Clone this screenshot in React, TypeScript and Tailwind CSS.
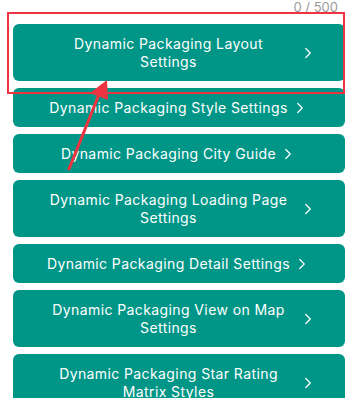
import { ChevronRight } from "lucide-react"

const items: { lines: string[] }[] = [
    { lines: ["Dynamic Packaging Layout", "Settings"] },
    { lines: ["Dynamic Packaging Style Settings"] },
    { lines: ["Dynamic Packaging City Guide"] },
    { lines: ["Dynamic Packaging Loading Page", "Settings"] },
    { lines: ["Dynamic Packaging Detail Settings"] },
    { lines: ["Dynamic Packaging View on Map", "Settings"] },
    { lines: ["Dynamic Packaging Star Rating", "Matrix Styles"] },
]

function SettingsButton({ lines }: { lines: string[] }) {
    const wrapped = lines.length > 1
    return (
        <button className="flex w-full items-center justify-center gap-[3px] rounded-md bg-[#009687] px-7 py-[10.5px] text-[14px] leading-[18px] tracking-[0.4px] text-white">
            <span className={wrapped ? "flex-1 text-center" : "whitespace-nowrap text-center"}>
                {lines.map((l, i) => (
                    <span key={i}>
                        {i > 0 && <br />}
                        {l}
                    </span>
                ))}
            </span>
            <ChevronRight className="h-[18px] w-[18px] shrink-0" strokeWidth={1.6} />
        </button>
    )
}

export default function App() {
    return (
        <div className="relative h-[398px] w-[358px] overflow-hidden bg-white font-['Inter',sans-serif]">
            {/* Char counter */}
            <div className="flex h-6 justify-end pr-5 pt-[1px] text-[13px] leading-[13px] text-[#9a9a9a]">
                0 / 500
            </div>

            {/* Settings list */}
            <div className="flex flex-col gap-[7px] px-[13px]">
                {items.map((it, i) => (
                    <SettingsButton key={i} lines={it.lines} />
                ))}
            </div>

            {/* Annotation: highlight box */}
            <div className="pointer-events-none absolute left-[7px] top-[12px] h-[82px] w-[338px] border-[2.5px] border-[#ee3440]" />

            {/* Annotation: arrow */}
            <svg className="pointer-events-none absolute left-0 top-0" width="358" height="398">
                <line x1="69" y1="169" x2="100" y2="92" stroke="#ee3440" strokeWidth="3" strokeLinecap="round" />
                <polygon points="107,80 108,100 90,93" fill="#ee3440" />
            </svg>
        </div>
    )
}
